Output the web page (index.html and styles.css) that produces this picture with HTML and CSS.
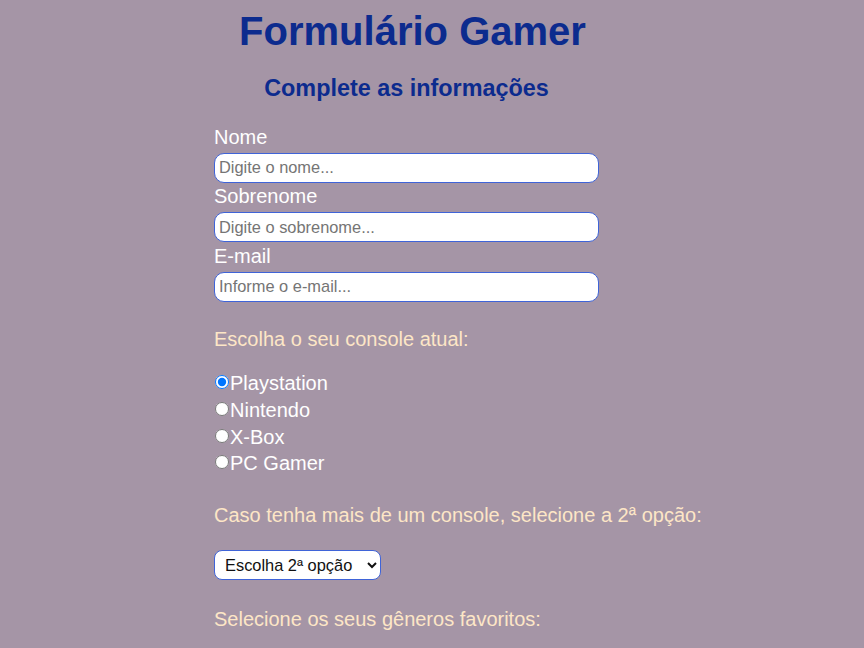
FILE: index.html
```html
<!DOCTYPE html>
<html lang="pt-BR">
<head>
<meta charset="utf-8">
<title>Formulário Gamer</title>
<link rel="stylesheet" href="styles.css">
</head>
<body>
<div class="page">
  <h1 class="title">Formulário Gamer</h1>
  <h3 class="subtitle">Complete as informações</h3>
  <form class="form">
    <label class="field-label" for="nome">Nome</label>
    <input class="text-input" id="nome" type="text" placeholder="Digite o nome...">
    <label class="field-label" for="sobrenome">Sobrenome</label>
    <input class="text-input" id="sobrenome" type="text" placeholder="Digite o sobrenome...">
    <label class="field-label" for="email">E-mail</label>
    <input class="text-input" id="email" type="email" placeholder="Informe o e-mail...">

    <p class="question q-console">Escolha o seu console atual:</p>
    <div class="radios">
      <div class="radio-row"><input class="radio" type="radio" name="console" id="ps" checked><label for="ps">Playstation</label></div>
      <div class="radio-row"><input class="radio" type="radio" name="console" id="nt"><label for="nt">Nintendo</label></div>
      <div class="radio-row"><input class="radio" type="radio" name="console" id="xb"><label for="xb">X-Box</label></div>
      <div class="radio-row"><input class="radio" type="radio" name="console" id="pc"><label for="pc">PC Gamer</label></div>
    </div>

    <p class="question q-second">Caso tenha mais de um console, selecione a 2ª opção:</p>
    <select class="select">
      <option>Escolha 2ª opção</option>
      <option>Playstation</option>
      <option>Nintendo</option>
      <option>X-Box</option>
      <option>PC Gamer</option>
    </select>

    <p class="question q-genres">Selecione os seus gêneros favoritos:</p>
  </form>
</div>
</body>
</html>
```

FILE: styles.css
```css
html, body {
  margin: 0;
  padding: 0;
}
body {
  background: #a595a6;
  font-family: "Liberation Sans", Arial, sans-serif;
  font-size: 20px;
  color: #ffffff;
}
.page {
  width: 385px;
  margin-left: 214px;
  padding-top: 8px;
}
.title {
  margin: 0;
  padding-left: 12px;
  font-size: 40px;
  line-height: 46px;
  font-weight: bold;
  text-align: center;
  color: #0c2b8e;
  white-space: nowrap;
}
.subtitle {
  margin: 21px 0 0;
  font-size: 23.4px;
  line-height: 27px;
  font-weight: bold;
  text-align: center;
  color: #0c2b8e;
}
.form {
  margin-top: 22.5px;
  display: flex;
  flex-direction: column;
  align-items: flex-start;
}
.field-label {
  display: block;
  line-height: 24px;
  color: #ffffff;
}
.text-input {
  box-sizing: border-box;
  width: 385px;
  height: 30px;
  margin: 4px 0 1.5px;
  padding: 0 4px;
  border: 1px solid #3f64d8;
  border-radius: 10px;
  background: #ffffff;
  font-family: "Liberation Sans", Arial, sans-serif;
  font-size: 16.4px;
  color: #222;
  outline: none;
}
.text-input::placeholder {
  color: #757575;
}
.question {
  margin: 0;
  line-height: 23px;
  color: #fde6c6;
  white-space: nowrap;
}
.q-console {
  margin-top: 25px;
}
.radios {
  margin-top: 19.3px;
}
.radio-row {
  line-height: 26.7px;
  color: #ffffff;
}
.radio {
  margin: 0 1px 0 1px;
  width: 14px;
  height: 14px;
  vertical-align: 1px;
}
.q-second {
  margin-top: 26.5px;
}
.select {
  margin-top: 23.7px;
  box-sizing: border-box;
  width: 167px;
  height: 30px;
  padding: 0 4px 0 6px;
  border: 1px solid #3f64d8;
  border-radius: 8px;
  background: #ffffff;
  font-family: "Liberation Sans", Arial, sans-serif;
  font-size: 16.4px;
  color: #111111;
}
.q-genres {
  margin-top: 27.6px;
}
```
